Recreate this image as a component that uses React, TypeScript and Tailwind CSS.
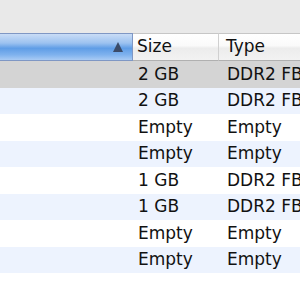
const rows = [
  { size: "2 GB", type: "DDR2 FB-DIMM", bg: "bg-[#d4d4d4]" },
  { size: "2 GB", type: "DDR2 FB-DIMM", bg: "bg-[#edf3fe]" },
  { size: "Empty", type: "Empty", bg: "bg-white" },
  { size: "Empty", type: "Empty", bg: "bg-[#edf3fe]" },
  { size: "1 GB", type: "DDR2 FB-DIMM", bg: "bg-white" },
  { size: "1 GB", type: "DDR2 FB-DIMM", bg: "bg-[#edf3fe]" },
  { size: "Empty", type: "Empty", bg: "bg-white" },
  { size: "Empty", type: "Empty", bg: "bg-[#edf3fe]" },
];

export default function App() {
  return (
    <div
      className="w-[300px] h-[300px] overflow-hidden bg-white text-[17px] text-[#111]"
      style={{ fontFamily: '"DejaVu Sans", "Liberation Sans", sans-serif' }}
    >
      {/* window area above the table */}
      <div className="h-[33px] bg-[#e9e9e9]" />

      {/* column headers */}
      <div className="flex h-[28px] w-[300px]">
        <div className="w-[133px] shrink-0 flex items-center justify-end pr-[9px] border-t border-b border-r border-[#7f97c4] bg-[linear-gradient(to_bottom,#c9dcf6_0%,#9cc2f0_35%,#5f9de6_55%,#7fb2ee_80%,#a9cbf4_100%)]">
          <svg width="10" height="10" viewBox="0 0 10 10">
            <polygon points="5,0 10,10 0,10" fill="#3b4b68" />
          </svg>
        </div>
        <div className="w-[86px] shrink-0 flex items-center pl-[4px] border-t border-b border-r border-t-[#c6c6c6] border-b-[#b0b0b0] border-r-[#d0d0d0] bg-[linear-gradient(to_bottom,#ffffff_0%,#fafafa_45%,#ececec_55%,#f2f2f2_100%)]">
          Size
        </div>
        <div className="flex-1 flex items-center pl-[7px] border-t border-b border-t-[#c6c6c6] border-b-[#b0b0b0] bg-[linear-gradient(to_bottom,#ffffff_0%,#fafafa_45%,#ececec_55%,#f2f2f2_100%)]">
          Type
        </div>
      </div>

      {/* rows */}
      {rows.map((r, i) => (
        <div key={i} className={`flex h-[26.5px] w-[300px] items-center whitespace-nowrap overflow-hidden ${r.bg}`}>
          <div className="w-[133px] shrink-0" />
          <div className="w-[86px] shrink-0 pl-[5px]">{r.size}</div>
          <div className="shrink-0 pl-[8px]">{r.type}</div>
        </div>
      ))}
    </div>
  );
}
